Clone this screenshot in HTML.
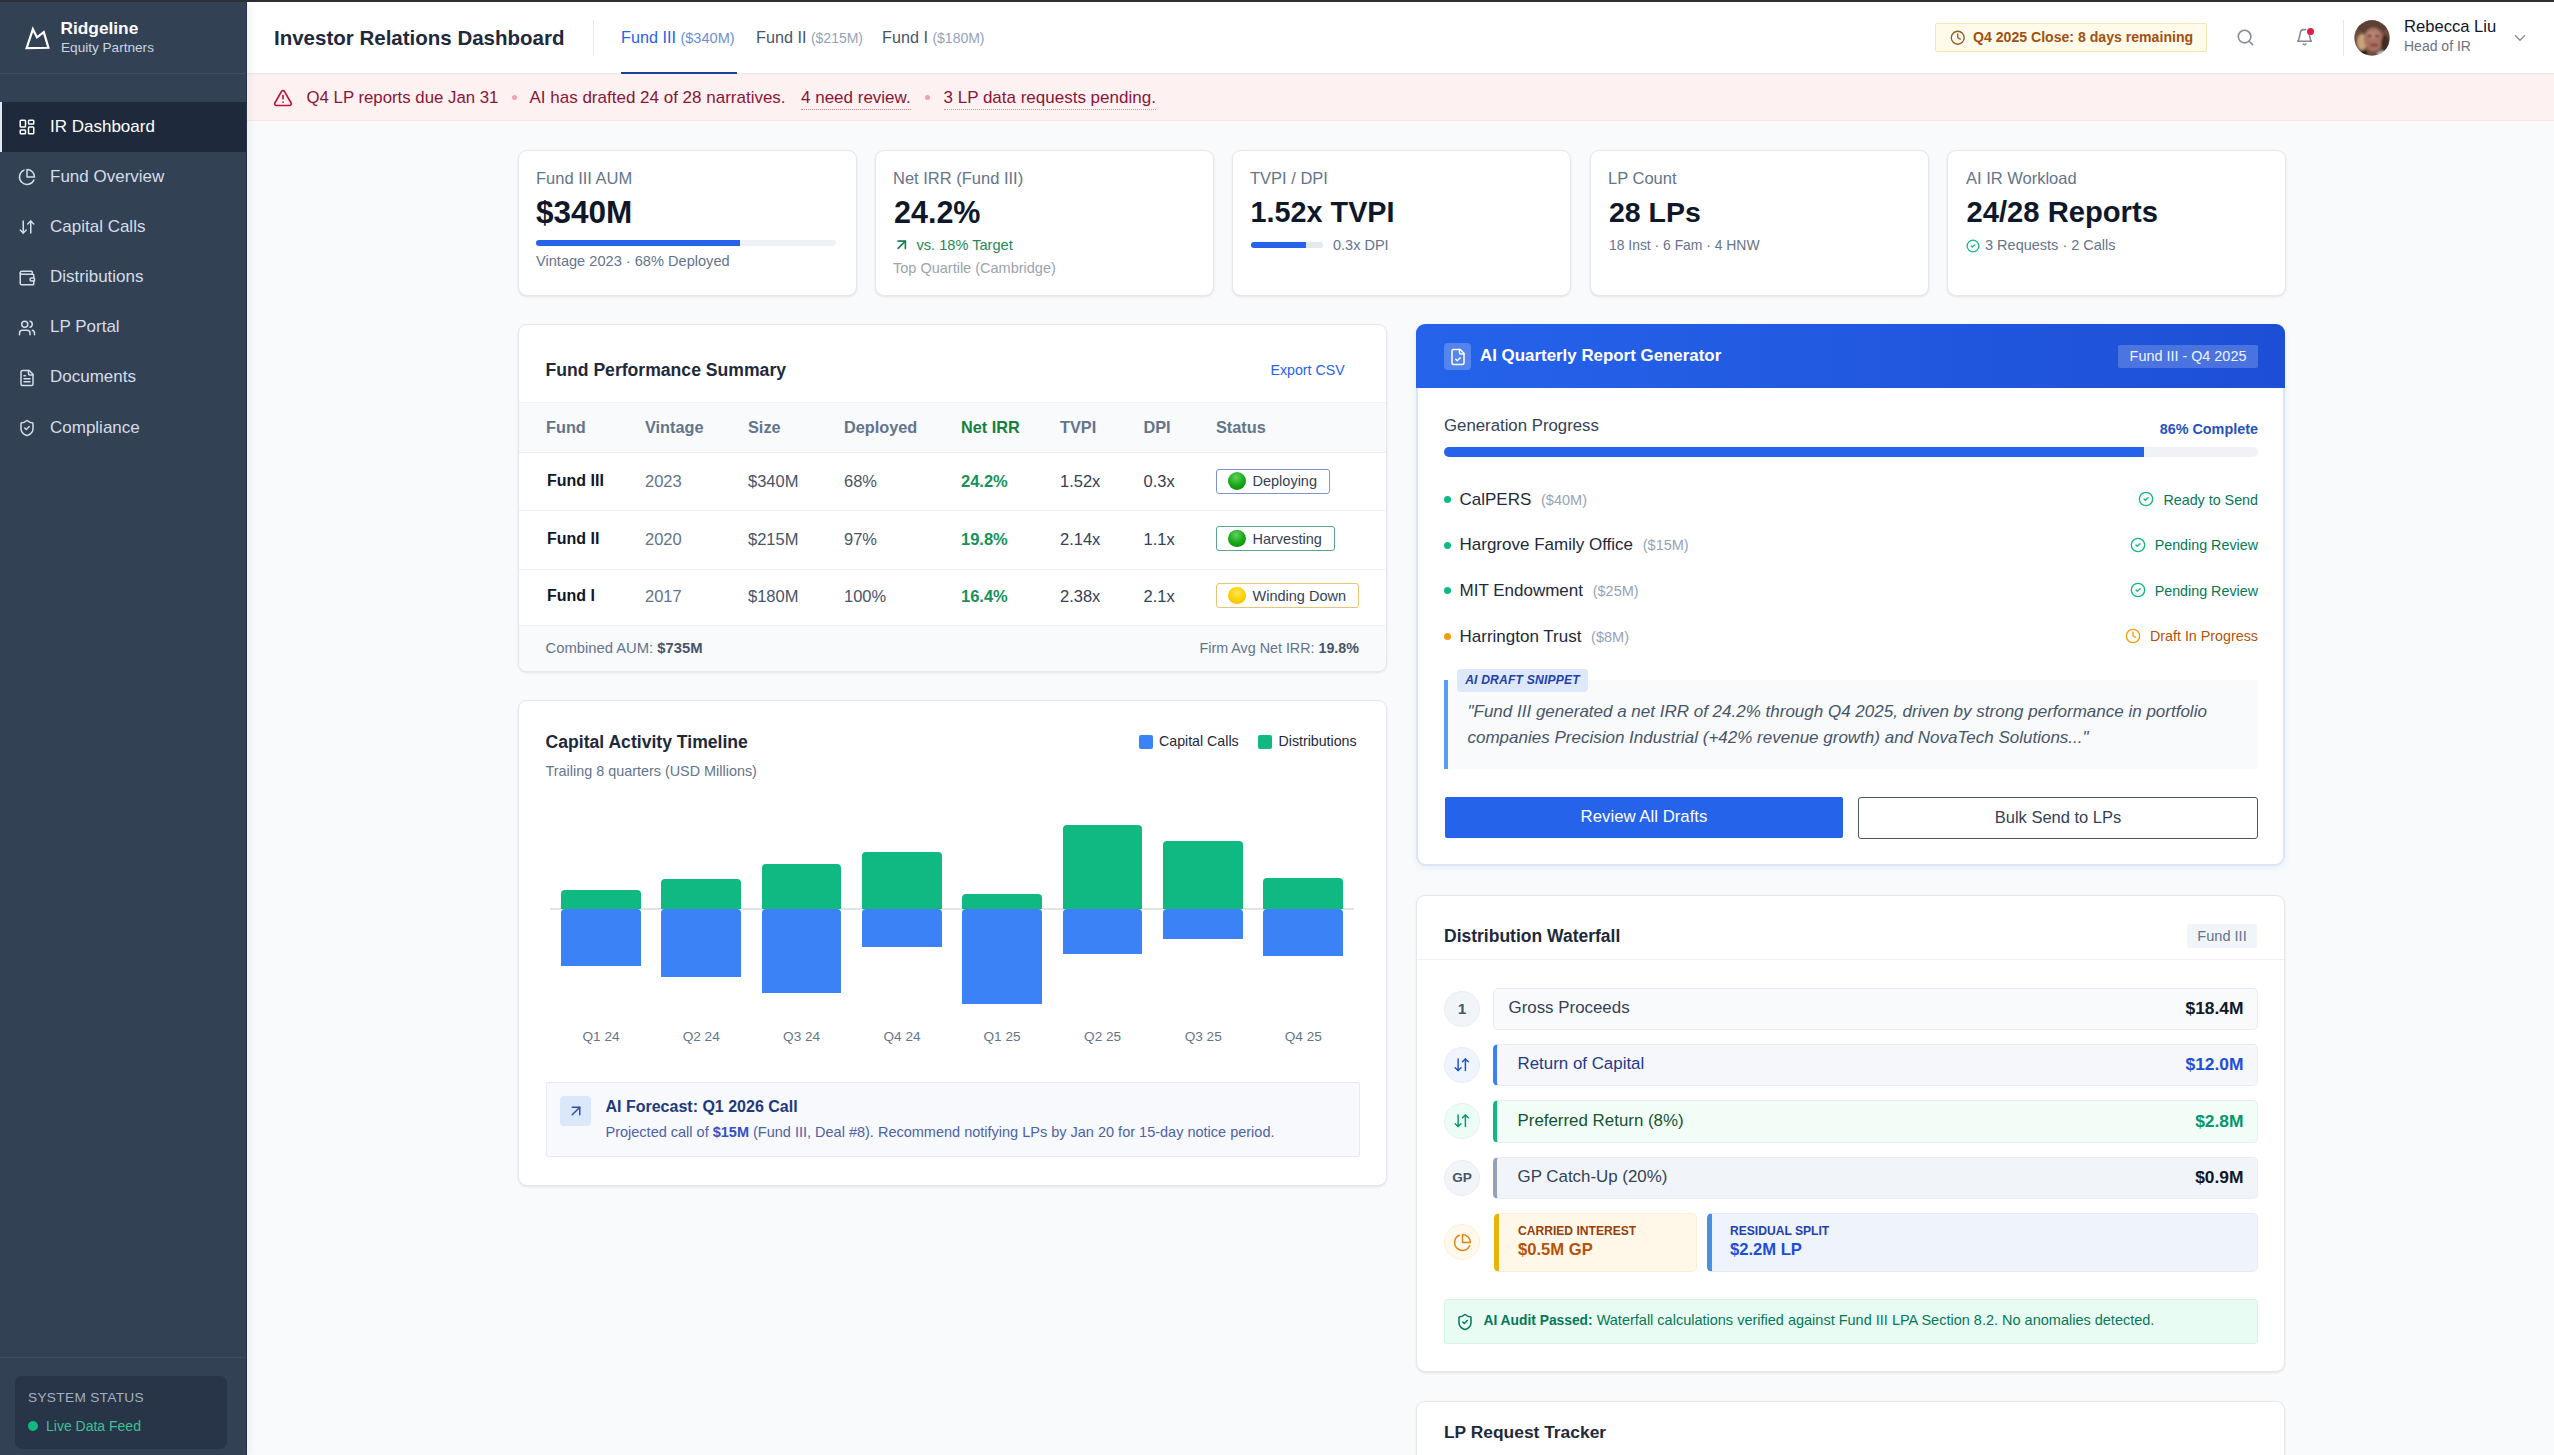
<!DOCTYPE html>
<html>
<head>
<meta charset="utf-8">
<style>
*{box-sizing:border-box;margin:0;padding:0}
html,body{width:2554px;height:1455px;overflow:hidden;background:#f8fafc;font-family:"Liberation Sans",sans-serif;color:#0f172a}
.a{position:absolute}
.t{position:absolute;white-space:nowrap;line-height:20px}
svg{display:block}
/* top bar */
#topbar{left:0;top:0;width:2554px;height:2px;background:#2f3033}
/* sidebar */
#side{left:0;top:2px;width:247px;height:1453px;background:#334155;border-right:1px solid #273244;box-shadow:3px 0 10px rgba(15,23,42,.05);z-index:2}
.nav{position:absolute;left:0;width:246px;height:50px}
.nav.act{background:#1e293b;border-left:2px solid #e2e8f0}
.nav svg{position:absolute;left:19px;top:17px}
.nav .lbl{position:absolute;left:51px;top:14.3px;line-height:22px;font-size:17px;color:#e2e8f0;white-space:nowrap}
/* header */
#hdr{left:247px;top:2px;width:2307px;height:72px;background:#fff;border-bottom:1px solid #e5e7eb}
#banner{left:247px;top:74px;width:2307px;height:47px;background:#fdf1f1;border-bottom:1px solid #fbe3e3}
.card{position:absolute;background:#fff;border:1px solid #e5e7eb;border-radius:9px;box-shadow:0 1px 3px rgba(15,23,42,.06),0 1px 2px rgba(15,23,42,.04)}
</style>
</head>
<body>
<div id="topbar" class="a"></div>

<!-- SIDEBAR -->
<div id="side" class="a">
  <!-- logo -->
  <svg class="a" style="left:23px;top:22px" width="30" height="28" viewBox="0 0 30 28"><path d="M3.6 24.2 L9.9 5.2 L14 13.4 L20.8 8.2 L25.4 23.8 Z" fill="none" stroke="#fff" stroke-width="2.2" stroke-linejoin="miter" stroke-miterlimit="4"/></svg>
  <div class="t" style="left:60.5px;top:16.2px;font-size:17.3px;font-weight:700;color:#fff">Ridgeline</div>
  <div class="t" style="left:61px;top:35.6px;font-size:13.6px;color:#cbd5e1">Equity Partners</div>
  <div class="a" style="left:0;top:71px;width:246px;height:1px;background:#3e4c60"></div>
  <div class="nav act" style="top:99.7px"><svg style="left:16px;top:16.5px" width="18" height="18" viewBox="0 0 24 24" fill="none" stroke="#ffffff" stroke-width="2" stroke-linecap="round" stroke-linejoin="round"><rect width="7" height="9" x="3" y="3" rx="1"/><rect width="7" height="5" x="14" y="3" rx="1"/><rect width="7" height="9" x="14" y="12" rx="1"/><rect width="7" height="5" x="3" y="16" rx="1"/></svg><div class="lbl" style="left:48px;color:#ffffff">IR Dashboard</div></div>
  <div class="nav" style="top:149.8px"><svg style="left:18px;top:16.5px" width="18" height="18" viewBox="0 0 24 24" fill="none" stroke="#d5dde8" stroke-width="2" stroke-linecap="round" stroke-linejoin="round"><path d="M21.21 15.89A10 10 0 1 1 8 2.83"/><path d="M22 12A10 10 0 0 0 12 2v10z"/></svg><div class="lbl" style="left:50px;color:#d5dde8">Fund Overview</div></div>
  <div class="nav" style="top:199.9px"><svg style="left:18px;top:16.5px" width="18" height="18" viewBox="0 0 24 24" fill="none" stroke="#d5dde8" stroke-width="2" stroke-linecap="round" stroke-linejoin="round"><path d="m3 16 4 4 4-4"/><path d="M7 20V4"/><path d="m21 8-4-4-4 4"/><path d="M17 4v16"/></svg><div class="lbl" style="left:50px;color:#d5dde8">Capital Calls</div></div>
  <div class="nav" style="top:250.0px"><svg style="left:18px;top:16.5px" width="18" height="18" viewBox="0 0 24 24" fill="none" stroke="#d5dde8" stroke-width="2" stroke-linecap="round" stroke-linejoin="round"><path d="M19 7V4a1 1 0 0 0-1-1H5a2 2 0 0 0 0 4h15a1 1 0 0 1 1 1v4h-3a2 2 0 0 0 0 4h3a1 1 0 0 0 1-1v-2a1 1 0 0 0-1-1"/><path d="M3 5v14a2 2 0 0 0 2 2h15a1 1 0 0 0 1-1v-4"/></svg><div class="lbl" style="left:50px;color:#d5dde8">Distributions</div></div>
  <div class="nav" style="top:300.1px"><svg style="left:18px;top:16.5px" width="18" height="18" viewBox="0 0 24 24" fill="none" stroke="#d5dde8" stroke-width="2" stroke-linecap="round" stroke-linejoin="round"><path d="M16 21v-2a4 4 0 0 0-4-4H6a4 4 0 0 0-4 4v2"/><circle cx="9" cy="7" r="4"/><path d="M22 21v-2a4 4 0 0 0-3-3.87"/><path d="M16 3.13a4 4 0 0 1 0 7.75"/></svg><div class="lbl" style="left:50px;color:#d5dde8">LP Portal</div></div>
  <div class="nav" style="top:350.2px"><svg style="left:18px;top:16.5px" width="18" height="18" viewBox="0 0 24 24" fill="none" stroke="#d5dde8" stroke-width="2" stroke-linecap="round" stroke-linejoin="round"><path d="M15 2H6a2 2 0 0 0-2 2v16a2 2 0 0 0 2 2h12a2 2 0 0 0 2-2V7Z"/><path d="M14 2v4a2 2 0 0 0 2 2h4"/><path d="M10 9H8"/><path d="M16 13H8"/><path d="M16 17H8"/></svg><div class="lbl" style="left:50px;color:#d5dde8">Documents</div></div>
  <div class="nav" style="top:400.3px"><svg style="left:18px;top:16.5px" width="18" height="18" viewBox="0 0 24 24" fill="none" stroke="#d5dde8" stroke-width="2" stroke-linecap="round" stroke-linejoin="round"><path d="M20 13c0 5-3.5 7.5-7.66 8.95a1 1 0 0 1-.67-.01C7.5 20.5 4 18 4 13V6a1 1 0 0 1 1-1c2 0 4.5-1.2 6.24-2.72a1.17 1.17 0 0 1 1.52 0C14.51 3.81 17 5 19 5a1 1 0 0 1 1 1z"/><path d="m9 12 2 2 4-4"/></svg><div class="lbl" style="left:50px;color:#d5dde8">Compliance</div></div>
  <div class="a" style="left:0;top:1355px;width:246px;height:1px;background:#3e4c60"></div>
  <div class="a" style="left:15px;top:1374px;width:212px;height:73px;background:#283548;border-radius:7px"></div>
  <div class="t" style="left:28px;top:1386px;font-size:13.7px;color:#a3b0c2;letter-spacing:.3px">SYSTEM STATUS</div>
  <div class="a" style="left:28px;top:1419px;width:10px;height:10px;border-radius:5px;background:#10b981"></div>
  <div class="t" style="left:46px;top:1414px;font-size:14px;color:#3cc192">Live Data Feed</div>
</div>

<!-- HEADER -->
<div id="hdr" class="a"></div>
<div class="t" style="left:274px;top:27.5px;font-size:20.5px;font-weight:700;color:#1e293b;line-height:20px">Investor Relations Dashboard</div>
<div class="a" style="left:593px;top:20px;width:1px;height:36px;background:#e5e7eb"></div>
<div class="t" style="left:621px;top:26.5px;font-size:16.2px;color:#2563eb">Fund III <span style="font-size:14.6px;color:#6b8fd6">($340M)</span></div>
<div class="a" style="left:621px;top:72px;width:116px;height:2.5px;background:#1e3f9e"></div>
<div class="t" style="left:756px;top:26.5px;font-size:16.2px;color:#475569">Fund II <span style="font-size:14px;color:#94a3b8">($215M)</span></div>
<div class="t" style="left:882px;top:26.5px;font-size:16.2px;color:#475569">Fund I <span style="font-size:14px;color:#94a3b8">($180M)</span></div>
<div class="a" style="left:1935px;top:23px;width:272px;height:29px;background:#fefbea;border:1px solid #f4e6b4;border-radius:2px"></div>
<svg class="a" style="left:1950px;top:30px" width="15.5" height="15.5" viewBox="0 0 24 24" fill="none" stroke="#8f5a26" stroke-width="2.1" stroke-linecap="round" stroke-linejoin="round"><circle cx="12" cy="12" r="10"/><polyline points="12 6 12 12 16 14"/></svg>
<div class="t" style="left:1973px;top:27px;font-size:14.1px;font-weight:700;color:#a1500f">Q4 2025 Close: 8 days remaining</div>
<svg class="a" style="left:2235px;top:27px" width="20" height="20" viewBox="0 0 20 20" fill="none" stroke="#868b93" stroke-width="1.6" stroke-linecap="round" stroke-linejoin="round"><circle cx="9.6" cy="9.6" r="6.3"/><path d="m14.2 14.2 3.4 3.4"/></svg>
<svg class="a" style="left:2294px;top:26px" width="20" height="20" viewBox="0 0 20 20" fill="none" stroke="#868b93" stroke-width="1.6" stroke-linecap="round" stroke-linejoin="round"><path d="M3.8 15.2 H17.4 Q16.6 14.4 16.2 12.6 L15.2 7.6"/><path d="M3.8 15.2 Q4.6 14.4 5 12.6 L6.6 5.8 Q7.1 3.6 9.3 3.6 H11.6"/><path d="M9.3 18.2 Q10.6 19.2 11.9 18.2"/></svg>
<div class="a" style="left:2307.3px;top:27.8px;width:7px;height:7px;border-radius:4px;background:#e11d48"></div>
<div class="a" style="left:2343px;top:20px;width:1px;height:36px;background:#e5e7eb"></div>
<svg class="a" style="left:2354px;top:20px" width="36" height="36" viewBox="0 0 36 36"><defs><clipPath id="avc"><circle cx="18" cy="18" r="17.7"/></clipPath><filter id="avb" x="-20%" y="-20%" width="140%" height="140%"><feGaussianBlur stdDeviation="1.1"/></filter></defs><g clip-path="url(#avc)"><rect width="36" height="36" fill="#6e4e3e"/><g filter="url(#avb)"><ellipse cx="18" cy="6" rx="16" ry="7" fill="#5a4034"/><ellipse cx="8" cy="22" rx="5" ry="8" fill="#c9a27a"/><ellipse cx="19.5" cy="19.5" rx="9.5" ry="12" fill="#a97262"/><ellipse cx="19" cy="15" rx="7" ry="4" fill="#b98474"/><ellipse cx="15.5" cy="16" rx="2.2" ry="1.2" fill="#5d3a30"/><ellipse cx="23" cy="16" rx="2.2" ry="1.2" fill="#5d3a30"/><ellipse cx="20" cy="25" rx="4.5" ry="1.5" fill="#7c4a3c"/><ellipse cx="31" cy="24" rx="4" ry="9" fill="#3e2a22"/><ellipse cx="9" cy="33" rx="4" ry="3" fill="#2a1a16"/><ellipse cx="28" cy="34" rx="5" ry="3" fill="#c5cad8"/></g></g></svg>
<div class="t" style="left:2404px;top:17px;font-size:16.6px;color:#0f172a">Rebecca Liu</div>
<div class="t" style="left:2404px;top:36.4px;font-size:14px;color:#6b7280">Head of IR</div>
<svg class="a" style="left:2511px;top:28.5px" width="18" height="18" viewBox="0 0 24 24" fill="none" stroke="#8b9096" stroke-width="2" stroke-linecap="round" stroke-linejoin="round"><path d="m6 9 6 6 6-6"/></svg>

<!-- BANNER -->
<div id="banner" class="a"></div>
<svg class="a" style="left:273px;top:88px" width="20" height="20" viewBox="0 0 24 24" fill="none" stroke="#be123c" stroke-width="2" stroke-linecap="round" stroke-linejoin="round"><path d="m21.73 18-8-14a2 2 0 0 0-3.48 0l-8 14A2 2 0 0 0 4 21h16a2 2 0 0 0 1.73-3"/><path d="M12 9v4"/><path d="M12 17h.01"/></svg>
<div class="t" style="left:306.5px;top:87.8px;font-size:16.8px;color:#8a1538">Q4 LP reports due Jan 31</div>
<div class="a" style="left:511.5px;top:94.5px;width:5px;height:5px;border-radius:3px;background:#f3a0b0"></div>
<div class="t" style="left:529.5px;top:87.8px;font-size:17px;color:#8a1538">AI has drafted 24 of 28 narratives.</div>
<div class="t" style="left:801px;top:88.8px;font-size:17px;color:#8a1538;border-bottom:1.5px dotted #e88ba0;line-height:18px;height:21px">4 need review.</div>
<div class="a" style="left:924.5px;top:94.5px;width:5px;height:5px;border-radius:3px;background:#f3a0b0"></div>
<div class="t" style="left:943.5px;top:88.8px;font-size:17px;color:#8a1538;border-bottom:1.5px dotted #e88ba0;line-height:18px;height:21px">3 LP data requests pending.</div>


<!-- KPI -->
<div class="card" style="left:518px;top:150px;width:339px;height:146px"></div>
<div class="card" style="left:875px;top:150px;width:339px;height:146px"></div>
<div class="card" style="left:1232px;top:150px;width:339px;height:146px"></div>
<div class="card" style="left:1590px;top:150px;width:339px;height:146px"></div>
<div class="card" style="left:1947px;top:150px;width:339px;height:146px"></div>
<div class="t" style="left:536px;top:168px;font-size:16.5px;color:#64748b">Fund III AUM</div>
<div class="t" style="left:536px;top:196.5px;font-size:31.5px;font-weight:700;color:#0f172a;line-height:30px">$340M</div>
<div class="a" style="left:536px;top:240px;width:300px;height:6px;border-radius:3px;background:#eef1f5"></div>
<div class="a" style="left:536px;top:240px;width:204px;height:6px;border-radius:3px 0 0 3px;background:#2563eb"></div>
<div class="t" style="left:536px;top:251px;font-size:14.6px;color:#64748b">Vintage 2023 · 68% Deployed</div>
<div class="t" style="left:893px;top:168px;font-size:16.5px;color:#64748b">Net IRR (Fund III)</div>
<div class="t" style="left:894px;top:197px;font-size:30.5px;font-weight:700;color:#0f172a;line-height:30px">24.2%</div>
<svg class="a" style="left:893px;top:235.5px" width="17.5" height="17.5" viewBox="0 0 24 24" fill="none" stroke="#1f7f58" stroke-width="2.3" stroke-linecap="round" stroke-linejoin="round"><path d="M7 17 17 7"/><path d="M7 7h10v10"/></svg>
<div class="t" style="left:916.5px;top:235px;font-size:14.6px;color:#23875c">vs. 18% Target</div>
<div class="t" style="left:893px;top:258px;font-size:14.5px;color:#9ca3af">Top Quartile (Cambridge)</div>
<div class="t" style="left:1250px;top:168px;font-size:16.5px;color:#64748b">TVPI / DPI</div>
<div class="t" style="left:1250.5px;top:197px;font-size:28.8px;font-weight:700;color:#0f172a;line-height:30px">1.52x TVPI</div>
<div class="a" style="left:1251px;top:242px;width:72px;height:6px;border-radius:3px;background:#e2e8f0"></div>
<div class="a" style="left:1251px;top:242px;width:55px;height:6px;border-radius:3px 0 0 3px;background:#2563eb"></div>
<div class="t" style="left:1333px;top:235px;font-size:14.5px;color:#64748b">0.3x DPI</div>
<div class="t" style="left:1608px;top:168px;font-size:16.5px;color:#64748b">LP Count</div>
<div class="t" style="left:1609px;top:197px;font-size:28.5px;font-weight:700;color:#0f172a;line-height:30px">28 LPs</div>
<div class="t" style="left:1609px;top:235px;font-size:13.9px;color:#64748b">18 Inst · 6 Fam · 4 HNW</div>
<div class="t" style="left:1966px;top:168px;font-size:16.5px;color:#64748b">AI IR Workload</div>
<div class="t" style="left:1966.5px;top:197px;font-size:29.2px;font-weight:700;color:#0f172a;line-height:30px">24/28 Reports</div>
<svg class="a" style="left:1966px;top:238.5px" width="14" height="14" viewBox="0 0 24 24" fill="none" stroke="#10b981" stroke-width="2.2" stroke-linecap="round" stroke-linejoin="round"><circle cx="12" cy="12" r="10"/><path d="m9 12 2 2 4-4"/></svg>
<div class="t" style="left:1985px;top:235px;font-size:14.5px;color:#64748b">3 Requests · 2 Calls</div>

<!-- PERF -->
<div class="card" style="left:518px;top:324px;width:869px;height:348px;overflow:hidden">
<div class="a" style="left:0;top:76.5px;width:869px;height:51px;background:#f8fafc;border-top:1px solid #f1f4f8;border-bottom:1px solid #e8edf3"></div>
<div class="a" style="left:0;top:185px;width:869px;height:1px;background:#eef2f6"></div>
<div class="a" style="left:0;top:243.5px;width:869px;height:1px;background:#eef2f6"></div>
<div class="a" style="left:0;top:300px;width:869px;height:48px;background:#f8fafc;border-top:1px solid #eef2f6"></div>
</div>
<div class="t" style="left:545.5px;top:360px;font-size:17.6px;font-weight:700;color:#1e293b">Fund Performance Summary</div>
<div class="t" style="left:1270.5px;top:359.5px;font-size:14.2px;color:#2563eb">Export CSV</div>
<div class="t" style="left:546px;top:417px;font-size:16.3px;font-weight:700;color:#64748b">Fund</div>
<div class="t" style="left:645px;top:417px;font-size:16.3px;font-weight:700;color:#64748b">Vintage</div>
<div class="t" style="left:748px;top:417px;font-size:16.3px;font-weight:700;color:#64748b">Size</div>
<div class="t" style="left:844px;top:417px;font-size:16.3px;font-weight:700;color:#64748b">Deployed</div>
<div class="t" style="left:961px;top:417px;font-size:16.3px;font-weight:700;color:#15803d">Net IRR</div>
<div class="t" style="left:1060px;top:417px;font-size:16.3px;font-weight:700;color:#64748b">TVPI</div>
<div class="t" style="left:1143.5px;top:417px;font-size:16.3px;font-weight:700;color:#64748b">DPI</div>
<div class="t" style="left:1216px;top:417px;font-size:16.3px;font-weight:700;color:#64748b">Status</div>
<div class="t" style="left:547px;top:471.2px;font-size:16px;font-weight:700;color:#0f172a">Fund III</div>
<div class="t" style="left:645px;top:471.2px;font-size:16.5px;color:#64748b">2023</div>
<div class="t" style="left:748px;top:471.2px;font-size:16.5px;color:#475569">$340M</div>
<div class="t" style="left:844px;top:471.2px;font-size:16.5px;color:#475569">68%</div>
<div class="t" style="left:961px;top:471.2px;font-size:16.5px;font-weight:700;color:#15935a">24.2%</div>
<div class="t" style="left:1060px;top:471.2px;font-size:16.5px;color:#334155">1.52x</div>
<div class="t" style="left:1143.5px;top:471.2px;font-size:16.5px;color:#334155">0.3x</div>
<div class="a" style="left:1215.5px;top:468.7px;width:114px;height:25px;border:1.5px solid #7f96cc;border-radius:3px;background:#fff"></div>
<div class="a" style="left:1228px;top:472.2px;width:17.5px;height:17.5px;border-radius:9px;background:radial-gradient(circle at 45% 30%,#5fd35f 0,#1aa81a 50%,#0b7d0b 100%)"></div>
<div class="t" style="left:1252.5px;top:471.2px;font-size:14.5px;color:#334155">Deploying</div>
<div class="t" style="left:547px;top:528.6px;font-size:16px;font-weight:700;color:#0f172a">Fund II</div>
<div class="t" style="left:645px;top:528.6px;font-size:16.5px;color:#64748b">2020</div>
<div class="t" style="left:748px;top:528.6px;font-size:16.5px;color:#475569">$215M</div>
<div class="t" style="left:844px;top:528.6px;font-size:16.5px;color:#475569">97%</div>
<div class="t" style="left:961px;top:528.6px;font-size:16.5px;font-weight:700;color:#15935a">19.8%</div>
<div class="t" style="left:1060px;top:528.6px;font-size:16.5px;color:#334155">2.14x</div>
<div class="t" style="left:1143.5px;top:528.6px;font-size:16.5px;color:#334155">1.1x</div>
<div class="a" style="left:1215.5px;top:526.1px;width:119px;height:25px;border:1.5px solid #5aa58c;border-radius:3px;background:#fff"></div>
<div class="a" style="left:1228px;top:529.6px;width:17.5px;height:17.5px;border-radius:9px;background:radial-gradient(circle at 45% 30%,#5fd35f 0,#1aa81a 50%,#0b7d0b 100%)"></div>
<div class="t" style="left:1252.5px;top:528.6px;font-size:14.5px;color:#334155">Harvesting</div>
<div class="t" style="left:547px;top:585.8px;font-size:16px;font-weight:700;color:#0f172a">Fund I</div>
<div class="t" style="left:645px;top:585.8px;font-size:16.5px;color:#64748b">2017</div>
<div class="t" style="left:748px;top:585.8px;font-size:16.5px;color:#475569">$180M</div>
<div class="t" style="left:844px;top:585.8px;font-size:16.5px;color:#475569">100%</div>
<div class="t" style="left:961px;top:585.8px;font-size:16.5px;font-weight:700;color:#15935a">16.4%</div>
<div class="t" style="left:1060px;top:585.8px;font-size:16.5px;color:#334155">2.38x</div>
<div class="t" style="left:1143.5px;top:585.8px;font-size:16.5px;color:#334155">2.1x</div>
<div class="a" style="left:1215.5px;top:583.3px;width:143px;height:25px;border:1.5px solid #e6c676;border-radius:3px;background:#fff"></div>
<div class="a" style="left:1228px;top:586.8px;width:17.5px;height:17.5px;border-radius:9px;background:radial-gradient(circle at 50% 35%,#ffe45a 0,#fdd000 55%,#eab000 100%)"></div>
<div class="t" style="left:1252.5px;top:585.8px;font-size:14.5px;color:#334155">Winding Down</div>
<div class="t" style="left:545.5px;top:637.5px;font-size:14.8px;color:#64748b">Combined AUM: <b style="color:#475569">$735M</b></div>
<div class="t" style="right:1195px;top:637.5px;font-size:14.3px;color:#64748b">Firm Avg Net IRR: <b style="color:#475569">19.8%</b></div>

<!-- CAPITAL -->
<div class="card" style="left:518px;top:700px;width:869px;height:485.5px"></div>
<div class="t" style="left:545.5px;top:731.5px;font-size:17.6px;font-weight:700;color:#1e293b">Capital Activity Timeline</div>
<div class="t" style="left:545.5px;top:760.7px;font-size:14.4px;color:#64748b">Trailing 8 quarters (USD Millions)</div>
<div class="a" style="left:1138.5px;top:734.5px;width:14px;height:14px;border-radius:2px;background:#3b82f6"></div>
<div class="t" style="left:1159px;top:731px;font-size:14.2px;color:#1e293b">Capital Calls</div>
<div class="a" style="left:1258px;top:734.5px;width:14px;height:14px;border-radius:2px;background:#10b981"></div>
<div class="t" style="left:1278.5px;top:731px;font-size:14.2px;color:#1e293b">Distributions</div>
<div class="a" style="left:550px;top:908px;width:804px;height:1.5px;background:#e1e5ea"></div>
<div class="a" style="left:561.0px;top:889.9px;width:79.5px;height:19.1px;background:#10b981;border-radius:4px 4px 0 0"></div>
<div class="a" style="left:561.0px;top:909px;width:79.5px;height:56.9px;background:#3b82f6;border-radius:4px 4px 0 0"></div>
<div class="t" style="left:561.0px;width:80px;text-align:center;top:1026.6px;font-size:13.6px;color:#64748b">Q1 24</div>
<div class="a" style="left:661.2px;top:878.8px;width:79.5px;height:30.2px;background:#10b981;border-radius:4px 4px 0 0"></div>
<div class="a" style="left:661.2px;top:909px;width:79.5px;height:68.2px;background:#3b82f6;border-radius:4px 4px 0 0"></div>
<div class="t" style="left:661.2px;width:80px;text-align:center;top:1026.6px;font-size:13.6px;color:#64748b">Q2 24</div>
<div class="a" style="left:761.6px;top:863.5px;width:79.5px;height:45.5px;background:#10b981;border-radius:4px 4px 0 0"></div>
<div class="a" style="left:761.6px;top:909px;width:79.5px;height:83.5px;background:#3b82f6;border-radius:4px 4px 0 0"></div>
<div class="t" style="left:761.6px;width:80px;text-align:center;top:1026.6px;font-size:13.6px;color:#64748b">Q3 24</div>
<div class="a" style="left:862.0px;top:852.0px;width:79.5px;height:57.0px;background:#10b981;border-radius:4px 4px 0 0"></div>
<div class="a" style="left:862.0px;top:909px;width:79.5px;height:37.6px;background:#3b82f6;border-radius:4px 4px 0 0"></div>
<div class="t" style="left:862.0px;width:80px;text-align:center;top:1026.6px;font-size:13.6px;color:#64748b">Q4 24</div>
<div class="a" style="left:962.0px;top:893.9px;width:79.5px;height:15.1px;background:#10b981;border-radius:4px 4px 0 0"></div>
<div class="a" style="left:962.0px;top:909px;width:79.5px;height:94.5px;background:#3b82f6;border-radius:4px 4px 0 0"></div>
<div class="t" style="left:962.0px;width:80px;text-align:center;top:1026.6px;font-size:13.6px;color:#64748b">Q1 25</div>
<div class="a" style="left:1062.6px;top:825.4px;width:79.5px;height:83.6px;background:#10b981;border-radius:4px 4px 0 0"></div>
<div class="a" style="left:1062.6px;top:909px;width:79.5px;height:45.1px;background:#3b82f6;border-radius:4px 4px 0 0"></div>
<div class="t" style="left:1062.6px;width:80px;text-align:center;top:1026.6px;font-size:13.6px;color:#64748b">Q2 25</div>
<div class="a" style="left:1163.2px;top:840.7px;width:79.5px;height:68.3px;background:#10b981;border-radius:4px 4px 0 0"></div>
<div class="a" style="left:1163.2px;top:909px;width:79.5px;height:29.8px;background:#3b82f6;border-radius:4px 4px 0 0"></div>
<div class="t" style="left:1163.2px;width:80px;text-align:center;top:1026.6px;font-size:13.6px;color:#64748b">Q3 25</div>
<div class="a" style="left:1263.3px;top:878.1px;width:79.5px;height:30.9px;background:#10b981;border-radius:4px 4px 0 0"></div>
<div class="a" style="left:1263.3px;top:909px;width:79.5px;height:46.8px;background:#3b82f6;border-radius:4px 4px 0 0"></div>
<div class="t" style="left:1263.3px;width:80px;text-align:center;top:1026.6px;font-size:13.6px;color:#64748b">Q4 25</div>
<div class="a" style="left:545.5px;top:1081.5px;width:814px;height:75px;background:#f7f9fd;border:1px solid #e5eaf3;border-radius:2px"></div>
<div class="a" style="left:560px;top:1096px;width:31px;height:30px;background:#dbe7fb;border-radius:4px"></div>
<svg class="a" style="left:566.5px;top:1102px" width="18" height="18" viewBox="0 0 24 24" fill="none" stroke="#2f4fa8" stroke-width="2" stroke-linecap="round" stroke-linejoin="round"><path d="M7 17 17 7"/><path d="M7 7h10v10"/></svg>
<div class="t" style="left:605.5px;top:1096.8px;font-size:16px;font-weight:700;color:#1f3a7c">AI Forecast: Q1 2026 Call</div>
<div class="t" style="left:605.5px;top:1121.5px;font-size:14.5px;color:#4d62a8">Projected call of <b style="color:#3451c6">$15M</b> (Fund III, Deal #8). Recommend notifying LPs by Jan 20 for 15-day notice period.</div>

<!-- AIGEN -->
<div class="a" style="left:1416px;top:324px;width:869px;height:542px;background:#fff;border:2px solid #dbe5f5;border-radius:10px;box-shadow:0 2px 6px rgba(37,99,235,.08)"></div>
<div class="a" style="left:1416px;top:324px;width:869px;height:64px;border-radius:9px 9px 0 0;background:linear-gradient(90deg,#2563eb 0%,#2159e0 50%,#1d4fd6 100%)"></div>
<div class="a" style="left:1444px;top:343px;width:27px;height:27px;border-radius:4px;background:rgba(255,255,255,.22)"></div>
<svg class="a" style="left:1448.5px;top:347.5px" width="18" height="18" viewBox="0 0 24 24" fill="none" stroke="#fff" stroke-width="2" stroke-linecap="round" stroke-linejoin="round"><path d="M15 2H6a2 2 0 0 0-2 2v16a2 2 0 0 0 2 2h12a2 2 0 0 0 2-2V7Z"/><path d="M14 2v4a2 2 0 0 0 2 2h4"/><path d="m9 15 2 2 4-4"/></svg>
<div class="t" style="left:1480px;top:346.3px;font-size:16.9px;font-weight:700;color:#fff">AI Quarterly Report Generator</div>
<div class="a" style="left:2118px;top:344.5px;width:140px;height:23px;border-radius:2px;background:rgba(255,255,255,.2)"></div>
<div class="t" style="left:2118px;width:140px;text-align:center;top:346px;font-size:14.4px;color:#eef3ff">Fund III - Q4 2025</div>
<div class="t" style="left:1444px;top:416.2px;font-size:16.8px;color:#334155">Generation Progress</div>
<div class="t" style="right:296px;top:418.8px;font-size:14.4px;font-weight:700;color:#2652bd">86% Complete</div>
<div class="a" style="left:1444px;top:447px;width:814px;height:9.5px;border-radius:5px;background:#f0f2f6"></div>
<div class="a" style="left:1444px;top:447px;width:700px;height:9.5px;border-radius:5px 0 0 5px;background:#2563eb"></div>
<div class="a" style="left:1444px;top:496.0px;width:7px;height:7px;border-radius:4px;background:#10b981"></div>
<div class="t" style="left:1459.5px;top:489.7px;font-size:17px;color:#1e293b">CalPERS <span style="font-size:14.5px;color:#94a3b8;margin-left:5px">($40M)</span></div>
<div class="t" style="right:296px;top:489.5px;font-size:14.3px;color:#047857"><svg style="display:inline-block;vertical-align:-2.5px;margin-right:9px" width="16" height="16" viewBox="0 0 24 24" fill="none" stroke="#10b981" stroke-width="2" stroke-linecap="round" stroke-linejoin="round"><circle cx="12" cy="12" r="10"/><path d="m9 12 2 2 4-4"/></svg>Ready to Send</div>
<div class="a" style="left:1444px;top:541.5px;width:7px;height:7px;border-radius:4px;background:#10b981"></div>
<div class="t" style="left:1459.5px;top:535.2px;font-size:17px;color:#1e293b">Hargrove Family Office <span style="font-size:14.5px;color:#94a3b8;margin-left:5px">($15M)</span></div>
<div class="t" style="right:296px;top:535px;font-size:14.3px;color:#047857"><svg style="display:inline-block;vertical-align:-2.5px;margin-right:9px" width="16" height="16" viewBox="0 0 24 24" fill="none" stroke="#10b981" stroke-width="2" stroke-linecap="round" stroke-linejoin="round"><circle cx="12" cy="12" r="10"/><path d="m9 12 2 2 4-4"/></svg>Pending Review</div>
<div class="a" style="left:1444px;top:587.3px;width:7px;height:7px;border-radius:4px;background:#10b981"></div>
<div class="t" style="left:1459.5px;top:581.0px;font-size:17px;color:#1e293b">MIT Endowment <span style="font-size:14.5px;color:#94a3b8;margin-left:5px">($25M)</span></div>
<div class="t" style="right:296px;top:580.8px;font-size:14.3px;color:#047857"><svg style="display:inline-block;vertical-align:-2.5px;margin-right:9px" width="16" height="16" viewBox="0 0 24 24" fill="none" stroke="#10b981" stroke-width="2" stroke-linecap="round" stroke-linejoin="round"><circle cx="12" cy="12" r="10"/><path d="m9 12 2 2 4-4"/></svg>Pending Review</div>
<div class="a" style="left:1444px;top:632.8px;width:7px;height:7px;border-radius:4px;background:#f59e0b"></div>
<div class="t" style="left:1459.5px;top:626.5px;font-size:17px;color:#1e293b">Harrington Trust <span style="font-size:14.5px;color:#94a3b8;margin-left:5px">($8M)</span></div>
<div class="t" style="right:296px;top:626.3px;font-size:14.3px;color:#b45309"><svg style="display:inline-block;vertical-align:-2.5px;margin-right:9px" width="16" height="16" viewBox="0 0 24 24" fill="none" stroke="#f59e0b" stroke-width="2" stroke-linecap="round" stroke-linejoin="round"><circle cx="12" cy="12" r="10"/><polyline points="12 6 12 12 16 14"/></svg>Draft In Progress</div>
<div class="a" style="left:1444px;top:680px;width:814px;height:89px;background:#f8fafc;border-left:4px solid #5b9cf3"></div>
<div class="a" style="left:1457px;top:669px;width:131px;height:22.5px;border-radius:4px;background:#dde8fb"></div>
<div class="t" style="left:1457px;width:131px;text-align:center;top:670.3px;font-size:12.1px;font-weight:700;font-style:italic;color:#1e40af;letter-spacing:.2px">AI DRAFT SNIPPET</div>
<div class="a" style="left:1467.5px;top:698.8px;width:780px;font-size:17.0px;font-style:italic;color:#475569;line-height:25.8px;white-space:normal">"Fund III generated a net IRR of 24.2% through Q4 2025, driven by strong performance in portfolio companies Precision Industrial (+42% revenue growth) and NovaTech Solutions..."</div>
<div class="a" style="left:1445px;top:797px;width:398px;height:41px;background:#2563eb;border-radius:2px"></div>
<div class="t" style="left:1445px;width:398px;text-align:center;top:807px;font-size:16.8px;color:#fff">Review All Drafts</div>
<div class="a" style="left:1858px;top:796.5px;width:400px;height:42px;background:#fff;border:1.5px solid #4b5563;border-radius:3px"></div>
<div class="t" style="left:1858px;width:400px;text-align:center;top:807px;font-size:16.5px;color:#334155">Bulk Send to LPs</div>

<!-- WATERFALL -->
<div class="card" style="left:1416px;top:895px;width:869px;height:477px"></div>
<div class="a" style="left:1417px;top:959px;width:867px;height:1px;background:#eef1f5"></div>
<div class="t" style="left:1444px;top:925.8px;font-size:17.5px;font-weight:700;color:#1e293b">Distribution Waterfall</div>
<div class="a" style="left:2187px;top:924px;width:70px;height:24px;border-radius:3px;background:#f1f5f9"></div>
<div class="t" style="left:2187px;width:70px;text-align:center;top:926px;font-size:14.6px;color:#64748b">Fund III</div>
<div class="a" style="left:1444px;top:990.5px;width:36px;height:36px;border-radius:18px;background:#f1f5f9;border:1px solid #e9eef4"></div>
<div class="t" style="left:1444px;width:36px;text-align:center;top:998.5px;font-size:15.5px;color:#475569;font-weight:700">1</div>
<div class="a" style="left:1493px;top:987.5px;width:764.5px;height:42.5px;background:#f8fafc;border:1px solid #e9edf2;border-radius:5px"></div>
<div class="t" style="left:1508.5px;top:998.0px;font-size:16.9px;color:#334155">Gross Proceeds</div>
<div class="t" style="right:310.5px;top:998.0px;font-size:17.4px;font-weight:700;color:#0f172a">$18.4M</div>
<div class="a" style="left:1444px;top:1046.5px;width:36px;height:36px;border-radius:18px;background:#eff4fd;border:1px solid #e9eef4"></div>
<svg class="a" style="left:1453.2px;top:1055.75px" width="17.5" height="17.5" viewBox="0 0 24 24" fill="none" stroke="#1d4ed8" stroke-width="2" stroke-linecap="round" stroke-linejoin="round"><path d="m3 16 4 4 4-4"/><path d="M7 20V4"/><path d="m21 8-4-4-4 4"/><path d="M17 4v16"/></svg>
<div class="a" style="left:1493px;top:1043.5px;width:764.5px;height:42.5px;background:#f5f7fb;border:1px solid #e9edf2;border-left:4px solid #3b82f6;border-radius:5px"></div>
<div class="t" style="left:1517.5px;top:1054.0px;font-size:16.9px;color:#1e3a8a">Return of Capital</div>
<div class="t" style="right:310.5px;top:1054.0px;font-size:17.4px;font-weight:700;color:#1d4ed8">$12.0M</div>
<div class="a" style="left:1444px;top:1103px;width:36px;height:36px;border-radius:18px;background:#ecfdf5;border:1px solid #e9eef4"></div>
<svg class="a" style="left:1453.2px;top:1112.25px" width="17.5" height="17.5" viewBox="0 0 24 24" fill="none" stroke="#059669" stroke-width="2" stroke-linecap="round" stroke-linejoin="round"><path d="m3 16 4 4 4-4"/><path d="M7 20V4"/><path d="m21 8-4-4-4 4"/><path d="M17 4v16"/></svg>
<div class="a" style="left:1493px;top:1100px;width:764.5px;height:42.5px;background:#f2fdf8;border:1px solid #e9edf2;border-left:4px solid #10b981;border-radius:5px"></div>
<div class="t" style="left:1517.5px;top:1110.5px;font-size:16.9px;color:#14532d">Preferred Return (8%)</div>
<div class="t" style="right:310.5px;top:1110.5px;font-size:17.4px;font-weight:700;color:#059669">$2.8M</div>
<div class="a" style="left:1444px;top:1159.5px;width:36px;height:36px;border-radius:18px;background:#f1f5f9;border:1px solid #e9eef4"></div>
<div class="t" style="left:1444px;width:36px;text-align:center;top:1167.5px;font-size:13.6px;color:#475569;font-weight:700">GP</div>
<div class="a" style="left:1493px;top:1156.5px;width:764.5px;height:42.5px;background:#f1f5f9;border:1px solid #e9edf2;border-left:4px solid #94a3b8;border-radius:5px"></div>
<div class="t" style="left:1517.5px;top:1167.0px;font-size:16.9px;color:#334155">GP Catch-Up (20%)</div>
<div class="t" style="right:310.5px;top:1167.0px;font-size:17.4px;font-weight:700;color:#0f172a">$0.9M</div>
<div class="a" style="left:1444px;top:1224px;width:36px;height:36px;border-radius:18px;background:#fef9ea;border:1px solid #fcf1d8"></div>
<svg class="a" style="left:1452.5px;top:1232.5px" width="19" height="19" viewBox="0 0 24 24" fill="none" stroke="#d98a1a" stroke-width="1.9" stroke-linecap="round" stroke-linejoin="round"><path d="M21.21 15.89A10 10 0 1 1 8 2.83"/><path d="M22 12A10 10 0 0 0 12 2v10z"/></svg>
<div class="a" style="left:1494px;top:1213px;width:203px;height:58.5px;background:#fff8e8;border:1px solid #fbf0d6;border-left:5px solid #eab308;border-radius:5px"></div>
<div class="t" style="left:1518px;top:1221px;font-size:12.1px;font-weight:700;color:#92400e">CARRIED INTEREST</div>
<div class="t" style="left:1518px;top:1240px;font-size:16.6px;font-weight:700;color:#b45309">$0.5M GP</div>
<div class="a" style="left:1707px;top:1213px;width:551px;height:58.5px;background:#eef3fc;border:1px solid #e6ecf7;border-left:5px solid #4a90e2;border-radius:5px"></div>
<div class="t" style="left:1730px;top:1221px;font-size:12.1px;font-weight:700;color:#1e40af">RESIDUAL SPLIT</div>
<div class="t" style="left:1730px;top:1240px;font-size:16.6px;font-weight:700;color:#1d4ed8">$2.2M LP</div>
<div class="a" style="left:1444px;top:1299px;width:814px;height:45px;background:#e9fcf3;border:1px solid #d5f5e6;border-radius:3px"></div>
<svg class="a" style="left:1456px;top:1313px" width="18" height="18" viewBox="0 0 24 24" fill="none" stroke="#047857" stroke-width="2" stroke-linecap="round" stroke-linejoin="round"><path d="M20 13c0 5-3.5 7.5-7.66 8.95a1 1 0 0 1-.67-.01C7.5 20.5 4 18 4 13V6a1 1 0 0 1 1-1c2 0 4.5-1.2 6.24-2.72a1.17 1.17 0 0 1 1.52 0C14.51 3.81 17 5 19 5a1 1 0 0 1 1 1z"/><path d="m9 12 2 2 4-4"/></svg>
<div class="t" style="left:1483.5px;top:1310px;font-size:14.5px;color:#047857"><b style="font-size:13.8px">AI Audit Passed:</b> Waterfall calculations verified against Fund III LPA Section 8.2. No anomalies detected.</div>
<div class="card" style="left:1416px;top:1401px;width:869px;height:120px"></div>
<div class="t" style="left:1444px;top:1421.8px;font-size:17.4px;font-weight:700;color:#1e293b">LP Request Tracker</div>
</body>
</html>
